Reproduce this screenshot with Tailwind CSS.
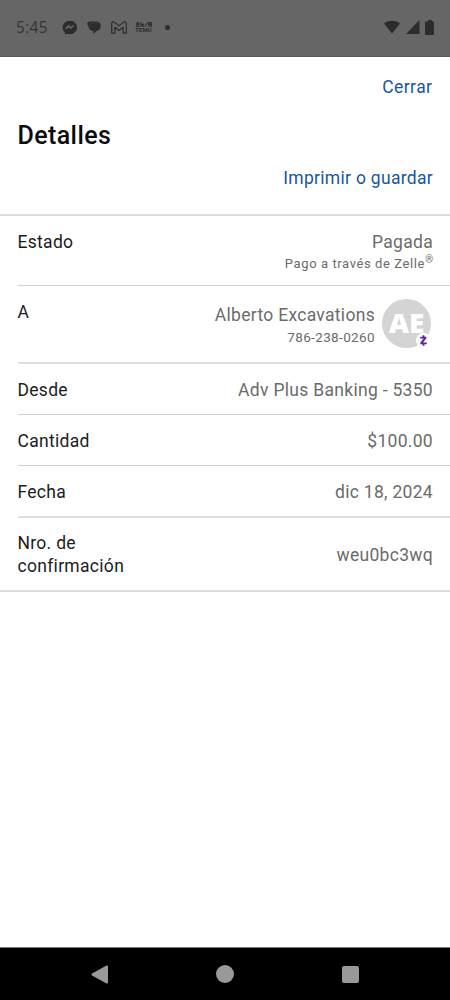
<!DOCTYPE html>
<html lang="es">
<head>
<meta charset="utf-8">
<title>Detalles</title>
<script src="https://cdn.jsdelivr.net/npm/@tailwindcss/browser@4"></script>
</head>
<body class="flex h-[1000px] w-[450px] flex-col overflow-hidden bg-white font-['Roboto',sans-serif] text-[17.5px] leading-[23px] tracking-[0.3px] text-[#1c1c1e]">
<header class="flex h-[57px] shrink-0 items-center justify-between border-b border-[#5c5c5c] bg-[#666] pr-[15px] pl-4 text-[#2c2c2c]">
  <div class="flex items-center">
    <span class="-mt-px w-[46px] font-['Open_Sans',sans-serif] text-[15.5px] tracking-[0.3px] text-[#343434]">5:45</span>
    <svg class="-mt-px h-4 w-4" viewBox="0 0 16 16"><path fill="currentColor" d="M7.800.7C3.800.7.700 3.600.700 7.400c0 2 .8 3.700 2.200 4.900v2.400l2.200-1c.8.2 1.600.4 2.700.4 4.200 0 7.200-2.900 7.200-6.700S12 .7 7.800.7z"/><path fill="none" stroke="#6a6a6a" stroke-width="1.600" d="M3.800 9l2.700-3 2.200 2 3-2.500"/></svg>
    <svg class="-mt-px ml-[9px] h-4 w-4" viewBox="0 0 16 16"><path fill="currentColor" d="M4 1.500h5c2.800 0 4.900 1.900 4.900 4.600S11.800 10.700 9.500 11L6.500 14v-3C4 11 2.300 9.800 1.800 7.500L.3 4.200C-.1 2.500 1.500 1.500 4 1.500z"/><path fill="none" stroke="#484848" stroke-width=".7" d="M2.800 6.500c0-2.400 1.600-3.500 3.900-3.500h5"/></svg>
    <svg class="-mt-px ml-[8px] h-4 w-4" viewBox="0 0 16 16"><path fill="none" stroke="currentColor" stroke-width="1.200" stroke-linejoin="round" d="M.7 13.100V3.300c0-1.600 1.500-1.900 2.500-1.200L8 5.900l4.800-3.800c1-.7 2.500-.4 2.500 1.200v9.800h-3.200V7.300L8 10.500 3.900 7.300v5.800z"/></svg>
    <div class="-mt-px ml-2 flex w-[17px] flex-col items-center">
      <svg class="h-[5px] w-4" viewBox="0 0 16 5"><path fill="none" stroke="currentColor" stroke-width="1.100" d="M0 1.200h3.500M1.800 0v2.500M0 4.400h3.500M0 2.800h3.500M5 0v5M5 3l3-1M6 3l2 2M9 4.500L11.500 .5M12.700.6h2.700v3.600h-2.700zM12.700 2.400h2.700"/></svg>
      <span class="text-[6px] leading-[6px] font-bold tracking-[0.1px]">TEMU</span>
    </div>
    <span class="-mt-px ml-[13px] h-[5px] w-[5px] rounded-full bg-current"></span>
  </div>
  <div class="-mt-[2px] flex items-center">
    <svg class="h-[14px] w-4" viewBox="0 0 16 14"><path fill="currentColor" d="M0 3.500C4.500-.3 11.500-.3 16 3.500L8 13.500z"/></svg>
    <svg class="ml-[6px] h-[14px] w-[14px]" viewBox="0 0 14 14"><path fill="currentColor" d="M13.500 0v14H0z"/></svg>
    <svg class="ml-[5px] h-[15px] w-[10px]" viewBox="0 0 10 15"><path fill="currentColor" d="M3 0h4v1.500h1.500c.3 0 .5.2.5.5v12.500c0 .3-.2.500-.5.500h-8c-.3 0-.5-.2-.5-.5V2c0-.3.200-.5.500-.5H3z"/></svg>
  </div>
</header>
<main class="grow">
  <div class="flex h-[157px] flex-col pt-[19px] pr-[17px] pl-[18px]">
    <a class="mr-[0.5px] self-end tracking-[0.45px] text-[#1b559f]">Cerrar</a>
    <h1 class="-ml-[0.5px] mt-[21px] text-[25px] leading-[32px] font-medium tracking-[0.4px] text-[#0c0c0c]">Detalles</h1>
    <a class="mt-[15px] self-end text-[#1b559f]">Imprimir o guardar</a>
  </div>
  <dl class="border-t-2 border-b-2 border-[#dcdcdc]">
    <div class="ml-[17.5px] flex h-[70px] justify-between border-b border-[#cfcfcf] pt-[15px] pr-[17px]">
      <dt>Estado</dt>
      <dd class="flex flex-col items-end text-[#6b6b6b]"><span>Pagada</span><span class="text-[13px] leading-[20px] tracking-[0.6px]">Pago a través de Zelle<sup class="text-[10px] tracking-normal">®</sup></span></dd>
    </div>
    <div class="ml-[17.5px] flex h-[78px] justify-between border-b-2 border-[#dedede] pt-[13px] pr-[19px]">
      <dt class="pt-[2px]">A</dt>
      <dd class="flex gap-[7px] text-[#6b6b6b]">
        <div class="flex flex-col items-end pt-[5px]"><span>Alberto Excavations</span><span class="text-[13.500px] leading-[21px] tracking-[0.370px]">786-238-0260</span></div>
        <div class="relative flex h-[49px] w-[49px] items-center justify-center rounded-full bg-[#d4d4d4]">
          <span class="inline-block scale-x-108 font-['Open_Sans',sans-serif] text-[26px] font-extrabold tracking-[0px] text-white">AE</span>
          <svg class="absolute right-0 bottom-0 h-[15px] w-[15px]" viewBox="0 0 15 15"><circle cx="7.500" cy="7.500" r="7.500" fill="#fff"/><path fill="none" stroke="#6021a6" stroke-width="1.800" d="M4.300 4.600h6M4.300 10.400h6.500M7.500 2.300v2.500M7.500 10.200v2.500"/><path fill="none" stroke="#6021a6" stroke-width="2.200" d="M9.400 4.700L5.400 10.200"/></svg>
        </div>
      </dd>
    </div>
    <div class="ml-[17.5px] flex h-[51px] items-center justify-between border-b border-[#cfcfcf] pt-[2px] pr-[17px]"><dt>Desde</dt><dd class="text-[#6b6b6b]">Adv Plus Banking - 5350</dd></div>
    <div class="ml-[17.5px] flex h-[51px] items-center justify-between border-b border-[#cfcfcf] pt-[2px] pr-[17px]"><dt>Cantidad</dt><dd class="text-[#6b6b6b]">$100.00</dd></div>
    <div class="ml-[17.5px] flex h-[52px] items-center justify-between border-b-2 border-[#dedede] pt-[2px] pr-[17px]"><dt>Fecha</dt><dd class="text-[#6b6b6b]">dic 18, 2024</dd></div>
    <div class="ml-[17.5px] flex h-[72px] items-center justify-between pt-[2px] pr-[17px]"><dt>Nro. de<br>confirmación</dt><dd class="text-[#6b6b6b]">weu0bc3wq</dd></div>
  </dl>
</main>
<nav class="flex h-[53px] shrink-0 items-center justify-between border-t border-[#777] bg-black px-[91px] text-[#999]">
  <svg class="h-[19px] w-[17px]" viewBox="0 0 17 19"><path fill="currentColor" stroke="currentColor" stroke-width="2" stroke-linejoin="round" d="M16 1.500v16L1.500 9.500z"/></svg>
  <span class="h-[18px] w-[18px] rounded-full bg-current"></span>
  <span class="h-[17px] w-[17px] rounded-[2px] bg-current"></span>
</nav>
</body>
</html>
